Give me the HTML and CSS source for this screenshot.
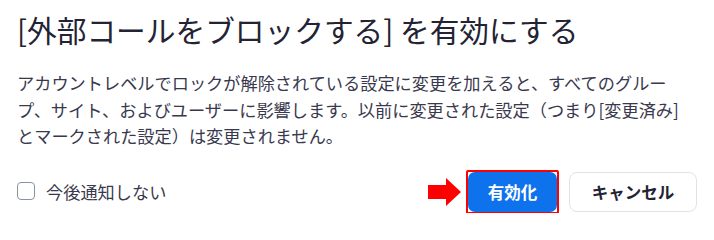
FILE: index.html
```html
<!DOCTYPE html>
<html lang="ja">
<head>
<meta charset="utf-8">
<link rel="stylesheet" href="styles.css">
</head>
<body>
<div class="dialog">
  <h1 class="title">[外部コールをブロックする] を有効にする</h1>
  <p class="desc">アカウントレベルでロックが解除されている設定に変更を加えると、すべてのグループ、サイト、およびユーザーに影響します。以前に変更された設定（つまり[変更済み]とマークされた設定）は変更されません。</p>
  <div class="footer">
    <label class="check">
      <span class="box"></span>
      <span class="check-label">今後通知しない</span>
    </label>
    <div class="actions">
      <svg class="arrow" width="33" height="28" viewBox="0 0 33 28"><path d="M0 7 H18 V0 L33 14 L18 28 V21 H0 Z" fill="#ff0000"/></svg>
      <div class="highlight"><button class="btn btn-primary">有効化</button></div>
      <button class="btn btn-secondary">キャンセル</button>
    </div>
  </div>
</div>
</body>
</html>
```

FILE: styles.css
```css
html, body {
  margin: 0;
  padding: 0;
  background: #ffffff;
}
body {
  font-family: "Noto Sans CJK JP", "Noto Sans", sans-serif;
}
.dialog {
  padding: 13px 17px 0 17px;
  width: 714px;
  box-sizing: border-box;
}
.title {
  margin: 0;
  font-size: 29.7px;
  font-weight: 400;
  line-height: 34px;
  color: #232333;
}
.desc {
  margin: 23px 0 0 0;
  width: 667px;
  font-size: 17.2px;
  line-height: 26.5px;
  color: #39394d;
}
.footer {
  margin-top: 22px;
  display: flex;
  align-items: center;
  justify-content: space-between;
  height: 41px;
}
.check {
  display: flex;
  align-items: center;
  margin-top: -2px;
}
.box {
  width: 16px;
  height: 16px;
  border: 1.6px solid #8a92a3;
  border-radius: 4px;
  box-sizing: content-box;
}
.check-label {
  margin-left: 11px;
  font-size: 17.2px;
  color: #39394d;
}
.actions {
  display: flex;
  align-items: center;
}
.arrow {
  display: block;
  margin-right: 5px;
}
.highlight {
  border: 2px solid #ff0000;
  border-radius: 2px;
  display: flex;
}
.btn {
  font-family: "Noto Sans CJK JP", "Noto Sans", sans-serif;
  font-weight: 700;
  font-size: 16.5px;
  height: 40px;
  border-radius: 8px;
  padding: 0;
  cursor: pointer;
}
.btn-primary {
  width: 89px;
  background: #0e72ed;
  color: #ffffff;
  border: none;
  border-radius: 7px;
}
.btn-secondary {
  margin-left: 10px;
  width: 128px;
  background: #ffffff;
  color: #232333;
  border: 1px solid #dfe3e8;
}
```
